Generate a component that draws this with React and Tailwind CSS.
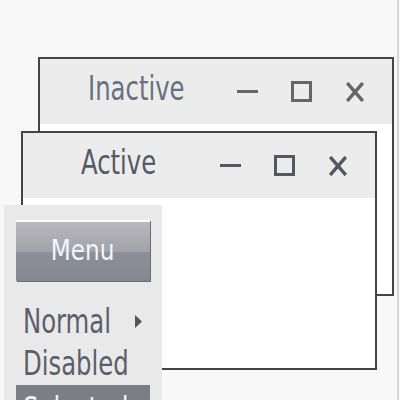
import React from "react";

const font = { fontFamily: '"DejaVu Sans Condensed", "DejaVu Sans", sans-serif' };

// window control glyphs
const Controls = ({ color }) => (
  <div className="flex items-center">
    <svg width="21" height="21" viewBox="0 0 21 21" className="mr-[33px]">
      <rect x="0" y="9" width="21" height="3" fill={color} />
    </svg>
    <svg width="21" height="21" viewBox="0 0 21 21" className="mr-[34px]">
      <rect x="1.5" y="1.5" width="18" height="18" fill="none" stroke={color} strokeWidth="3" />
    </svg>
    <svg width="18" height="20" viewBox="0 0 18 20">
      <path d="M1.2 1 L16.8 19 M16.8 1 L1.2 19" stroke={color} strokeWidth="3.4" />
    </svg>
  </div>
);

const Win = ({ title, className, titleColor, iconColor, titleLeft }) => (
  <div className={`absolute w-[356px] h-[239px] border-2 border-[#444] bg-white ${className}`}>
    <div className="h-[65px] bg-[#ececec] flex items-center">
      <div className="flex-1 flex pb-[6px]" style={{ paddingLeft: titleLeft }}>
        <span className="text-[33px] leading-none scale-x-[0.82] origin-left whitespace-nowrap" style={{ ...font, color: titleColor }}>
          {title}
        </span>
      </div>
      <div className="pr-[28px]">
        <Controls color={iconColor} />
      </div>
    </div>
  </div>
);

export default function App() {
  return (
    <div className="relative w-[400px] h-[400px] bg-[#f8f8f8] overflow-hidden">
      <div className="absolute left-[397px] top-0 w-[2px] h-full bg-[#d6d6d6]" />
      <Win title="Inactive" className="left-[38px] top-[57px]" titleColor="#6a7080" iconColor="#666" titleLeft={48} />
      <Win title="Active" className="left-[21px] top-[131px]" titleColor="#555a66" iconColor="#555862" titleLeft={58} />

      {/* menu */}
      <div className="absolute left-[4px] top-[205px] w-[158px] h-[200px] bg-[#e9e9e9] flex flex-col pt-[15px]">
        <div className="shrink-0 mx-[12px] h-[61px] border-t-2 border-white bg-[linear-gradient(to_bottom,#b8b8bd_0%,#a2a3a9_50%,#8c8f97_52%,#868991_100%)] shadow-[1px_1px_0_#6b6d73] flex items-center justify-center">
          <span className="text-[28px] leading-none text-[#f2f5ff] scale-x-[0.92] pb-[2px]" style={font}>Menu</span>
        </div>
        <div className="shrink-0 mt-[19px] pl-[19px] pr-[20px] h-[42px] flex items-center justify-between">
          <span className="text-[33px] leading-none text-[#5c5f6b] scale-x-[0.82] origin-left whitespace-nowrap" style={font}>Normal</span>
          <svg width="7" height="13" viewBox="0 0 7 13"><path d="M0 0 L7 6.5 L0 13 Z" fill="#555" /></svg>
        </div>
        <div className="shrink-0 pl-[19px] h-[43px] flex items-center">
          <span className="text-[33px] leading-none text-[#5c5f6b] scale-x-[0.82] origin-left whitespace-nowrap" style={font}>Disabled</span>
        </div>
        <div className="shrink-0 mx-[12px] h-[40px] bg-[#7c7e86] pl-[7px] pt-[8px]">
          <span className="inline-block text-[33px] leading-none text-[#f2f2f2] scale-x-[0.82] origin-left whitespace-nowrap" style={font}>Selected</span>
        </div>
      </div>
    </div>
  );
}
